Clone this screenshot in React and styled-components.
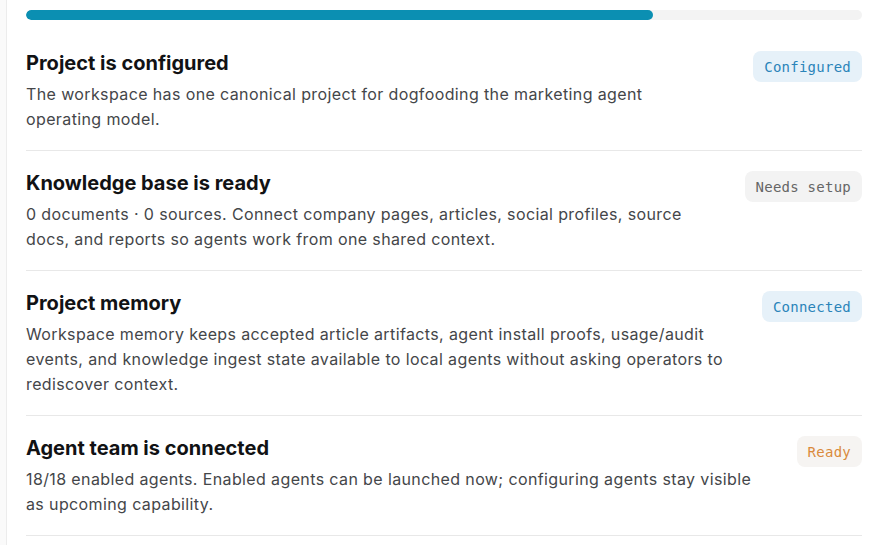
import React from "react";
import styled, { createGlobalStyle } from "styled-components";

const CHECKS = [
  {
    title: "Project is configured",
    body: "The workspace has one canonical project for dogfooding the marketing agent operating model.",
    status: "Configured",
    tone: "info",
  },
  {
    title: "Knowledge base is ready",
    body: "0 documents · 0 sources. Connect company pages, articles, social profiles, source docs, and reports so agents work from one shared context.",
    status: "Needs setup",
    tone: "muted",
  },
  {
    title: "Project memory",
    body: "Workspace memory keeps accepted article artifacts, agent install proofs, usage/audit events, and knowledge ingest state available to local agents without asking operators to rediscover context.",
    status: "Connected",
    tone: "info",
  },
  {
    title: "Agent team is connected",
    body: "18/18 enabled agents. Enabled agents can be launched now; configuring agents stay visible as upcoming capability.",
    status: "Ready",
    tone: "warn",
  },
];

const TONES = {
  info: { bg: "#e6f1f9", fg: "#2a84b9" },
  muted: { bg: "#f3f3f3", fg: "#666666" },
  warn: { bg: "#f6f4f2", fg: "#da8a3c" },
};

const Global = createGlobalStyle`
  html, body {
    margin: 0;
    padding: 0;
    background: #fafafa;
    font-family: Inter, "Noto Sans", sans-serif;
    -webkit-font-smoothing: antialiased;
  }
`;

const Shell = styled.div`
  margin-left: 6px;
  min-height: 545px;
  background: #fff;
  border-left: 1px solid #ececec;
  padding: 10px 18px 0 19px;
  box-sizing: border-box;
`;

const Track = styled.div`
  height: 10px;
  border-radius: 99px;
  background: #f3f3f3;
  overflow: hidden;
  margin-bottom: 11px;
`;

const Fill = styled.div`
  height: 100%;
  border-radius: 99px;
  background: #0b8fb2;
`;

const List = styled.div`
  display: flex;
  flex-direction: column;
`;

const Row = styled.div`
  display: flex;
  align-items: flex-start;
  gap: 32px;
  padding: 20px 0 18px;
  border-bottom: 1px solid #e8e8e8;
`;

const Text = styled.div`
  flex: 1;
  min-width: 0;
`;

const Title = styled.h3`
  margin: 0 0 7px;
  font-size: 20px;
  line-height: 24px;
  font-weight: 700;
  color: #111214;
`;

const Body = styled.p`
  margin: 0;
  font-size: 16px;
  line-height: 25px;
  letter-spacing: 0.38px;
  color: #444649;
`;

const Badge = styled.span`
  flex: none;
  display: inline-flex;
  align-items: center;
  height: 31px;
  padding: 0 11px;
  border-radius: 8px;
  font-family: "DejaVu Sans Mono", "Liberation Mono", monospace;
  font-size: 14px;
  letter-spacing: 0.25px;
  background: ${(p) => TONES[p.tone].bg};
  color: ${(p) => TONES[p.tone].fg};
`;

export default function App() {
  const progress = 0.75;

  return (
    <>
      <Global />
      <Shell>
        <Track>
          <Fill style={{ width: `${progress * 100}%` }} />
        </Track>
        <List>
          {CHECKS.map((c) => (
            <Row key={c.title}>
              <Text>
                <Title>{c.title}</Title>
                <Body>{c.body}</Body>
              </Text>
              <Badge tone={c.tone}>{c.status}</Badge>
            </Row>
          ))}
        </List>
      </Shell>
    </>
  );
}
